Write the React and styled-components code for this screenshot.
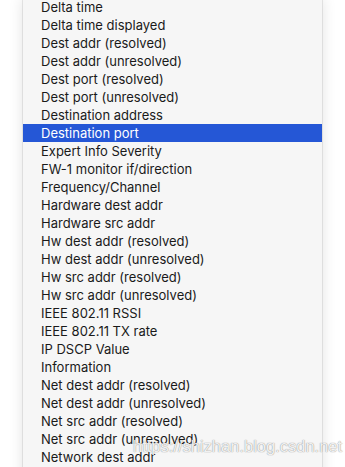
import React from "react";
import styled, { createGlobalStyle } from "styled-components";

const items = [
  "Delta time",
  "Delta time displayed",
  "Dest addr (resolved)",
  "Dest addr (unresolved)",
  "Dest port (resolved)",
  "Dest port (unresolved)",
  "Destination address",
  "Destination port",
  "Expert Info Severity",
  "FW-1 monitor if/direction",
  "Frequency/Channel",
  "Hardware dest addr",
  "Hardware src addr",
  "Hw dest addr (resolved)",
  "Hw dest addr (unresolved)",
  "Hw src addr (resolved)",
  "Hw src addr (unresolved)",
  "IEEE 802.11 RSSI",
  "IEEE 802.11 TX rate",
  "IP DSCP Value",
  "Information",
  "Net dest addr (resolved)",
  "Net dest addr (unresolved)",
  "Net src addr (resolved)",
  "Net src addr (unresolved)",
  "Network dest addr",
  "Network src addr",
];

const selected = "Destination port";

const GlobalStyle = createGlobalStyle`
  html, body {
    margin: 0;
    padding: 0;
    background: #ffffff;
    overflow: hidden;
  }
  body {
    font-family: Inter, "Liberation Sans", sans-serif;
  }
`;

const Page = styled.div`
  position: relative;
  width: 345px;
  height: 467px;
  overflow: hidden;
`;

const Menu = styled.ul`
  list-style: none;
  margin: -2px 0 0 23px;
  padding: 0;
  width: 299px;
  background: #f6f6f6;
  box-shadow: 0 0 0 1px rgba(0, 0, 0, 0.08), 0 0 14px rgba(0, 0, 0, 0.12);
`;

const Item = styled.li`
  height: 18px;
  line-height: 18px;
  padding-left: 18px;
  font-size: 13px;
  color: ${(p) => (p.$active ? "#ffffff" : "#1a1a1a")};
  background: ${(p) => (p.$active ? "#2557d6" : "transparent")};
  white-space: nowrap;
`;

const Watermark = styled.div`
  position: absolute;
  left: 133px;
  top: 437px;
  font-family: "Liberation Sans", sans-serif;
  font-size: 16.5px;
  color: rgba(255, 255, 255, 0.9);
  text-shadow: 0 0 1px rgba(90, 90, 90, 0.6), 0 0 1px rgba(90, 90, 90, 0.4);
  white-space: nowrap;
  pointer-events: none;
`;

export default function App() {
  return (
    <Page>
      <GlobalStyle />
      <Menu>
        {items.map((name) => (
          <Item key={name} $active={name === selected}>
            {name}
          </Item>
        ))}
      </Menu>
      <Watermark>https://shizhan.blog.csdn.net</Watermark>
    </Page>
  );
}
